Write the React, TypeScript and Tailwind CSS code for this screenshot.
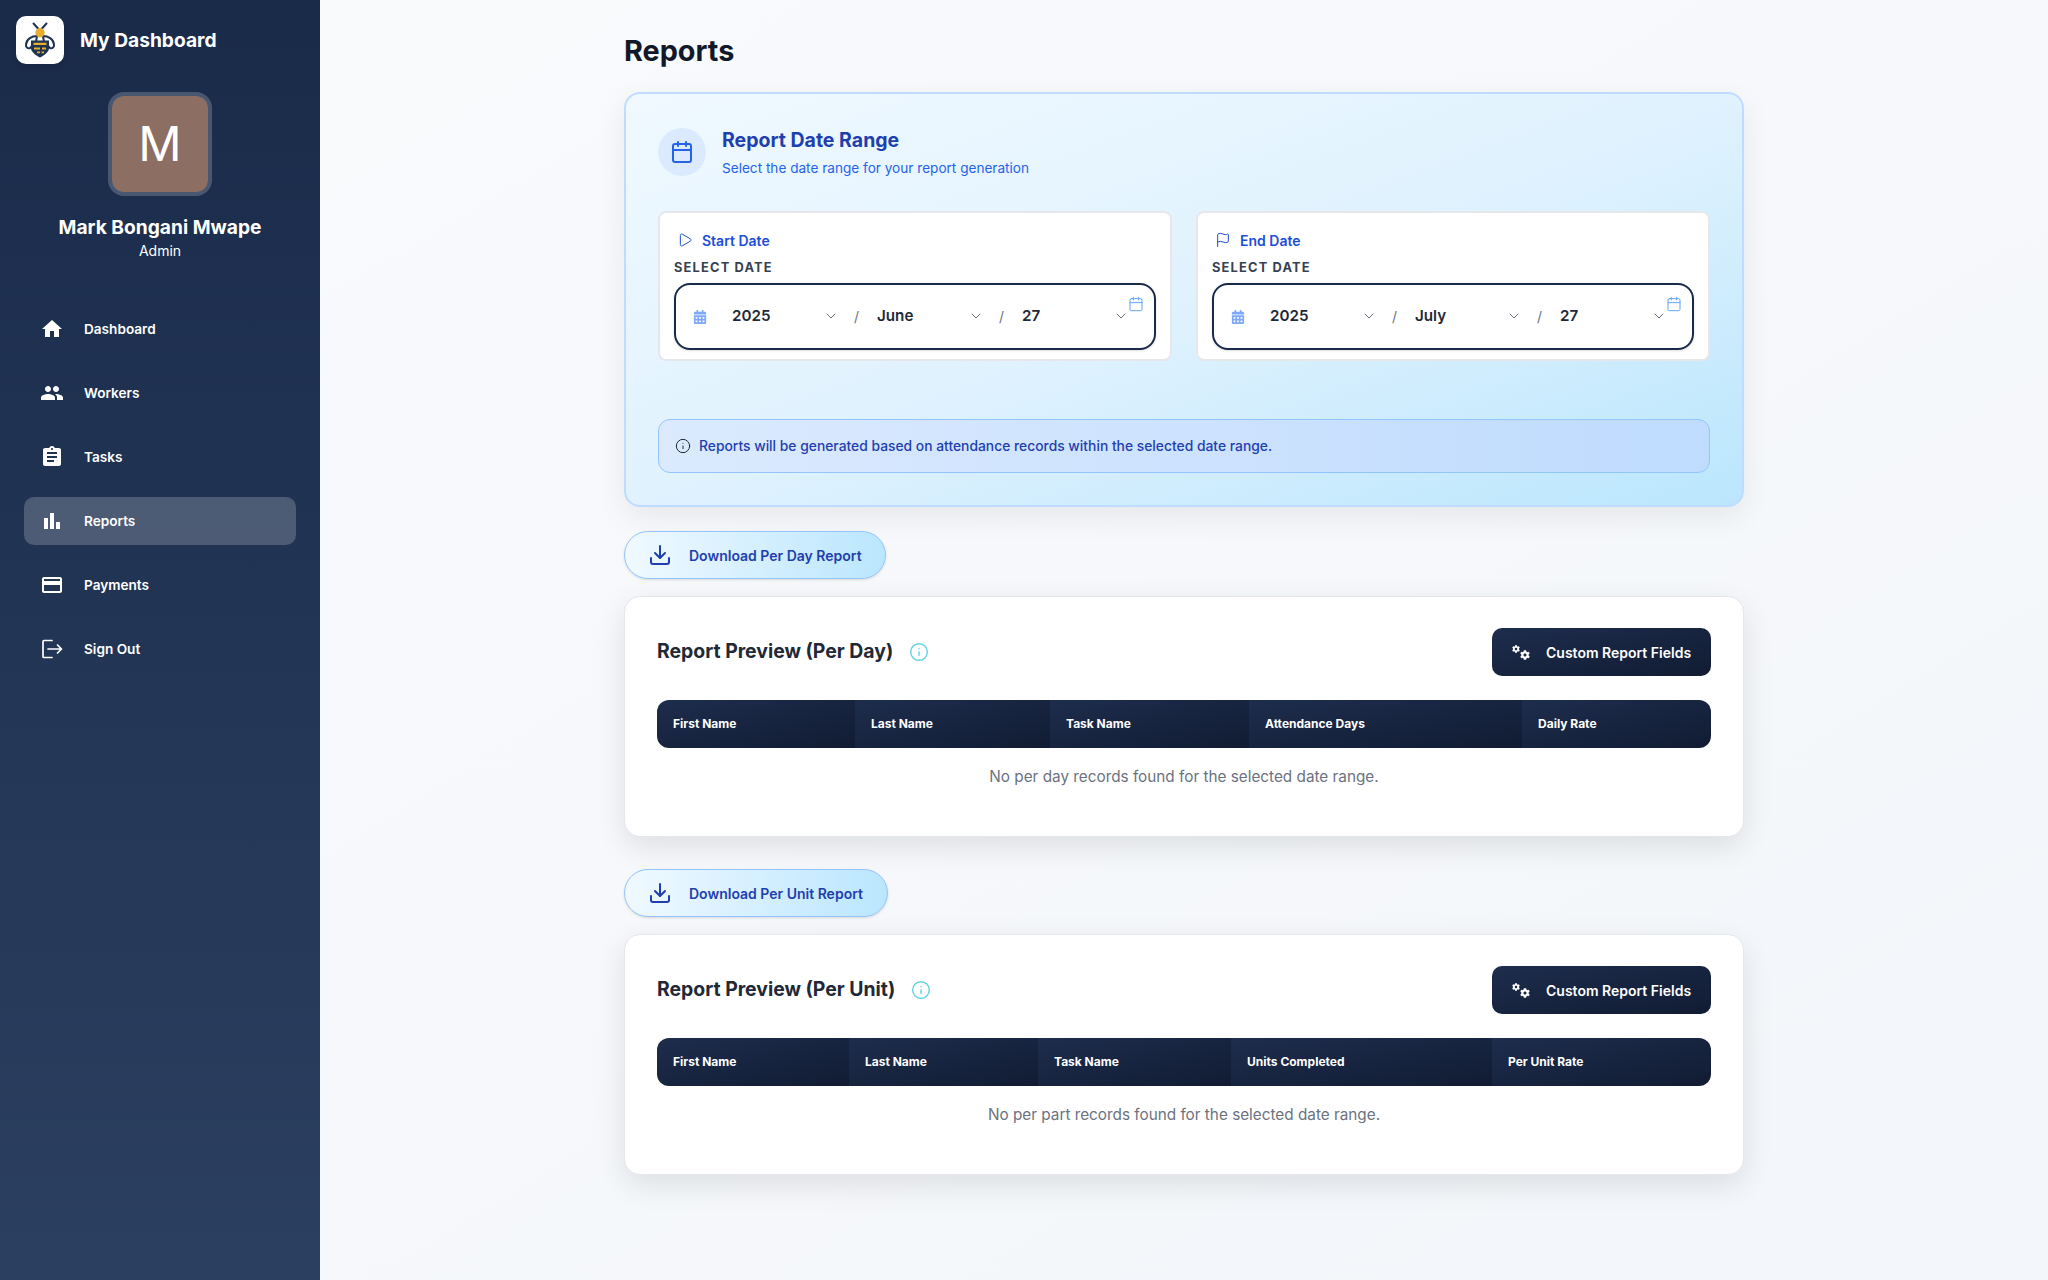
import { Calendar, ChevronDown, Download, Flag, Info, Play } from "lucide-react"
import { FaCalendarAlt, FaCog } from "react-icons/fa"
import { MdAssignment, MdBarChart, MdCreditCard, MdHome, MdPeople } from "react-icons/md"

function SignOutIcon({ size = 24 }: { size?: number }) {
  return (
    <svg width={size} height={size} viewBox="0 0 24 24" fill="none" stroke="currentColor" strokeWidth="1.7" strokeLinecap="round" strokeLinejoin="round">
      <path d="M12 3.500H4a1 1 0 0 0-1 1v15a1 1 0 0 0 1 1h8" />
      <path d="M8 12h13.500M17.500 8l4 4-4 4" />
    </svg>
  )
}

const navItems = [
  { label: "Dashboard", icon: MdHome },
  { label: "Workers", icon: MdPeople },
  { label: "Tasks", icon: MdAssignment },
  { label: "Reports", icon: MdBarChart, active: true },
  { label: "Payments", icon: MdCreditCard },
  { label: "Sign Out", icon: SignOutIcon },
]

function BeeLogo() {
  return (
    <svg width="30" height="36" viewBox="0 0 30 36" fill="none">
      {/* antennae */}
      <path d="M8.500 1.500l4.500 5M21.500 1.500l-4.500 5" stroke="#1f3350" strokeWidth="2" strokeLinecap="round" />
      {/* wings */}
      <path d="M12 14C7 14 1.500 17 1 22.500c-.2 3 2 4.500 4 3.500L11 20z" fill="#fff" stroke="#1f3350" strokeWidth="2" strokeLinejoin="round" />
      <path d="M18 14c5 0 10.500 3 11 8.500.2 3-2 4.500-4 3.500L19 20z" fill="#fff" stroke="#1f3350" strokeWidth="2" strokeLinejoin="round" />
      {/* body */}
      <path d="M6 18.500h18v8c0 3.500-5 7-9 9-4-2-9-5.500-9-9z" fill="#1f3350" />
      <path d="M8.500 20.700h13v2.300h-13zM9 25.500h6v2H9zM17 25.500h4v2h-4zM12 29.500h3v1.800h-3zM16.500 29.500h2.500v1.800h-2.500z" fill="#e6ae2c" />
      {/* head */}
      <circle cx="15" cy="10.700" r="4.700" fill="#e6ae2c" />
    </svg>
  )
}

function Sidebar() {
  return (
    <aside className="flex h-screen w-[320px] shrink-0 flex-col bg-linear-to-b from-[#1a2b4a] to-[#2b3f60] text-white">
      <div className="flex items-center gap-4 p-4">
        <div className="flex h-12 w-12 items-center justify-center rounded-[10px] bg-white shadow-md">
          <BeeLogo />
        </div>
        <span className="text-[19.2px] font-bold">My Dashboard</span>
      </div>

      <div className="mt-3 flex flex-col items-center">
        <div className="flex h-[104px] w-[104px] items-center justify-center rounded-2xl border-4 border-white/20 bg-[#8d6e63] bg-clip-padding text-[48px] leading-none">
          M
        </div>
        <div className="mt-[17px] text-[19.2px] font-bold leading-7">Mark Bongani Mwape</div>
        <div className="text-[14px] leading-5">Admin</div>
      </div>

      <nav className="mt-[44px] flex flex-col gap-4 px-6">
        {navItems.map((item) => (
          <div
            key={item.label}
            className={`flex h-12 items-center gap-5 rounded-[10px] px-4 text-[13.6px] font-semibold ${item.active ? "bg-white/20" : ""}`}
          >
            <item.icon size={24} />
            <span>{item.label}</span>
          </div>
        ))}
      </nav>
    </aside>
  )
}

function DateSelect({ value, withSlash }: { value: string; withSlash?: boolean }) {
  return (
    <>
      <div className="flex w-[107px] shrink-0 items-center justify-between text-[15.2px] font-semibold text-[#1f2937]">
        <span>{value}</span>
        <ChevronDown size={16} strokeWidth={1.5} className="text-gray-500" />
      </div>
      {withSlash && <span className="w-[38px] shrink-0 pl-[15px] text-[14px] text-gray-500">/</span>}
    </>
  )
}

function DateCard({ label, icon, year, month, day }: { label: string; icon: React.ReactNode; year: string; month: string; day: string }) {
  return (
    <div className="h-[150px] rounded-lg border-2 border-[#e5e7eb] bg-white px-[14px] pt-[17px]">
      <div className="flex h-5 items-center gap-[9px] pl-[3px] text-[14px] font-semibold text-[#1d4ed8]">
        {icon}
        <span>{label}</span>
      </div>
      <div className="mt-[10px] text-[12.8px] font-bold leading-4 tracking-[1.2px] text-[#374151]">SELECT DATE</div>
      <div className="relative mt-[7px] flex h-[67px] items-center rounded-2xl border-2 border-[#1a2b4a] pl-[17px] shadow-sm">
        <FaCalendarAlt size={14} className="mr-[25px] shrink-0 text-[#7fa9fa]" />
        <DateSelect value={year} withSlash />
        <DateSelect value={month} withSlash />
        <DateSelect value={day} />
        <Calendar size={16} strokeWidth={1.5} className="absolute right-[10px] top-[11px] text-[#60a5fa]" />
      </div>
    </div>
  )
}

function DownloadButton({ label, width }: { label: string; width: string }) {
  return (
    <button className={`flex h-12 items-center gap-[17px] rounded-full border border-[#93c5fd] bg-linear-to-r from-[#f0f9ff] to-[#bae6fd] pl-[23px] text-[14px] font-semibold text-[#1e40af] shadow-sm ${width}`}>
      <Download size={24} strokeWidth={2} />
      <span>{label}</span>
    </button>
  )
}

function GearsIcon() {
  return (
    <span className="relative block h-[15px] w-[18px] shrink-0">
      <FaCog size={8} className="absolute left-0 top-0" />
      <FaCog size={10} className="absolute bottom-0 right-0" />
    </span>
  )
}

function PreviewCard({ title, cols, columns, empty }: { title: string; cols: string; columns: string[]; empty: string }) {
  return (
    <section className="h-[241px] rounded-2xl border border-[#e5e7eb] bg-white px-8 pt-[31px] shadow-[0_10px_30px_rgba(0,0,0,0.1)]">
      <div className="flex items-center justify-between">
        <div className="flex items-center gap-4">
          <h2 className="text-[19.4px] font-bold text-[#1f2937]">{title}</h2>
          <Info size={20} strokeWidth={1.75} className="text-[#5fd3e6]" />
        </div>
        <button className="flex h-12 w-[219px] items-center gap-[16px] rounded-[10px] bg-linear-to-br from-[#1e2d4d] to-[#111c33] pl-5 text-[14px] font-semibold text-white">
          <GearsIcon />
          <span>Custom Report Fields</span>
        </button>
      </div>
      <div className={`mt-6 grid h-12 overflow-hidden rounded-xl ${cols}`}>
        {columns.map((col) => (
          <div key={col} className="flex items-center bg-linear-to-br from-[#1e2d4d] to-[#111c33] pl-4 text-[12px] font-bold text-white">
            {col}
          </div>
        ))}
      </div>
      <p className="mt-[17px] text-center text-[15.3px] leading-6 text-[#6b7280]">{empty}</p>
    </section>
  )
}

export default function App() {
  return (
    <div className="flex h-screen bg-linear-to-br from-[#f9fafc] to-[#f3f6fa] font-['Inter',sans-serif]">
      <Sidebar />
      <main className="flex-1 overflow-hidden">
        <div className="mx-auto w-[1120px]">
          <h1 className="mt-[31px] text-[28.8px] font-bold leading-10 text-[#111827]">Reports</h1>

          <section className="mt-[21px] h-[415px] rounded-2xl border-2 border-[#bfdbfe] bg-linear-to-br from-[#f0f9ff] via-[#e0f2fe] to-[#bae6fd] p-8 shadow-[0_10px_30px_rgba(0,0,0,0.07)]">
            <div className="flex items-center gap-4">
              <div className="flex h-12 w-12 items-center justify-center rounded-full bg-[#dbeafe]">
                <Calendar size={24} strokeWidth={2} className="text-[#2563eb]" />
              </div>
              <div>
                <div className="text-[19.5px] font-bold leading-7 text-[#1e40af]">Report Date Range</div>
                <div className="mt-1 text-[13.6px] leading-5 text-[#2563eb]">Select the date range for your report generation</div>
              </div>
            </div>

            <div className="mt-[33px] grid grid-cols-2 gap-6">
              <DateCard label="Start Date" icon={<Play size={16} strokeWidth={1.5} />} year="2025" month="June" day="27" />
              <DateCard label="End Date" icon={<Flag size={16} strokeWidth={1.5} />} year="2025" month="July" day="27" />
            </div>

            <div className="mt-[58px] flex h-[54px] items-center gap-2 rounded-xl border border-[#93c5fd] bg-linear-to-r from-[#dbeafe] to-[#bfdbfe] pl-4 text-[13.85px] font-medium text-[#1e40af]">
              <Info size={16} strokeWidth={1.5} className="text-[#1f2937]" />
              <span>Reports will be generated based on attendance records within the selected date range.</span>
            </div>
          </section>

          <div className="mt-6">
            <DownloadButton label="Download Per Day Report" width="w-[262px]" />
          </div>
          <div className="mt-[17px]">
            <PreviewCard
              title="Report Preview (Per Day)"
              cols="grid-cols-[198px_195px_199px_273px_189px]"
              columns={["First Name", "Last Name", "Task Name", "Attendance Days", "Daily Rate"]}
              empty="No per day records found for the selected date range."
            />
          </div>

          <div className="mt-8">
            <DownloadButton label="Download Per Unit Report" width="w-[264px]" />
          </div>
          <div className="mt-[17px]">
            <PreviewCard
              title="Report Preview (Per Unit)"
              cols="grid-cols-[192px_189px_193px_261px_219px]"
              columns={["First Name", "Last Name", "Task Name", "Units Completed", "Per Unit Rate"]}
              empty="No per part records found for the selected date range."
            />
          </div>
        </div>
      </main>
    </div>
  )
}
